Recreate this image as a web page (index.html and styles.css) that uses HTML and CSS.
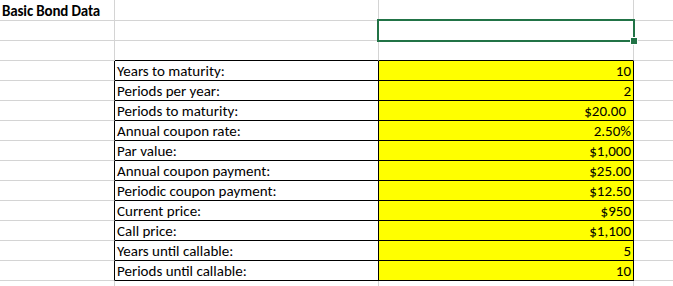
FILE: index.html
```html
<!DOCTYPE html>
<html>
<head>
<meta charset="utf-8">
<link rel="stylesheet" href="styles.css">
</head>
<body>
<div class="sheet">
  <div class="cell first title">Basic Bond Data</div>
  <div class="cell first"></div>
  <div class="cell first"></div>
  <div class="cell first colD"></div>

  <div class="cell"></div>
  <div class="cell"></div>
  <div class="cell selected"><span class="sel-box"></span><span class="sel-handle"></span></div>
  <div class="cell colD"></div>

  <div class="cell"></div>
  <div class="cell top"></div>
  <div class="cell top"></div>
  <div class="cell colD"></div>

  <div class="cell edge"></div><div class="cell tb lab">Years to maturity:</div><div class="cell tb val">10</div><div class="cell colD"></div>
  <div class="cell edge"></div><div class="cell tb lab">Periods per year:</div><div class="cell tb val">2</div><div class="cell colD"></div>
  <div class="cell edge"></div><div class="cell tb lab">Periods to maturity:</div><div class="cell tb val acct">$20.00</div><div class="cell colD"></div>
  <div class="cell edge"></div><div class="cell tb lab">Annual coupon rate:</div><div class="cell tb val">2.50%</div><div class="cell colD"></div>
  <div class="cell edge"></div><div class="cell tb lab">Par value:</div><div class="cell tb val">$1,000</div><div class="cell colD"></div>
  <div class="cell edge"></div><div class="cell tb lab">Annual coupon payment:</div><div class="cell tb val">$25.00</div><div class="cell colD"></div>
  <div class="cell edge"></div><div class="cell tb lab">Periodic coupon payment:</div><div class="cell tb val">$12.50</div><div class="cell colD"></div>
  <div class="cell edge"></div><div class="cell tb lab">Current price:</div><div class="cell tb val">$950</div><div class="cell colD"></div>
  <div class="cell edge"></div><div class="cell tb lab">Call price:</div><div class="cell tb val">$1,100</div><div class="cell colD"></div>
  <div class="cell edge"></div><div class="cell tb lab">Years until callable:</div><div class="cell tb val">5</div><div class="cell colD"></div>
  <div class="cell edge"></div><div class="cell tb lab">Periods until callable:</div><div class="cell tb val">10</div><div class="cell colD"></div>

  <div class="cell"></div>
  <div class="cell"></div>
  <div class="cell"></div>
  <div class="cell colD"></div>
</div>
</body>
</html>
```

FILE: styles.css
```css
html, body {
  margin: 0;
  padding: 0;
  background: #ffffff;
  overflow: hidden;
}

.sheet {
  display: grid;
  grid-template-columns: 115px 264px 255px 1fr;
  grid-template-rows: 21px;
  grid-auto-rows: 20px;
  width: 673px;
  height: 286px;
  overflow: hidden;
  font-family: Carlito, Calibri, "Liberation Sans", sans-serif;
  font-size: 15px;
  color: #000000;
}

.cell {
  box-sizing: border-box;
  border-right: 1px solid #d4d4d4;
  border-bottom: 1px solid #d4d4d4;
  line-height: 19px;
  padding: 1px 2px 0 2px;
  white-space: nowrap;
  overflow: visible;
  min-width: 0;
}

.first {
  padding-top: 2px;
}

.title {
  font-weight: bold;
  padding-left: 2px;
  letter-spacing: -0.15px;
}

.colD {
  border-right: none;
}

.edge {
  border-right-color: #000000;
}

.top {
  border-bottom-color: #000000;
}

.tb {
  border-right-color: #000000;
  border-bottom-color: #000000;
  overflow: hidden;
}

.val {
  background: #ffff00;
  text-align: right;
}

.acct {
  padding-right: 7px;
}

.selected {
  position: relative;
  overflow: visible;
}

.sel-box {
  position: absolute;
  left: -2px;
  top: -2px;
  width: 258px;
  height: 23px;
  box-sizing: border-box;
  border: 2px solid #217346;
  z-index: 2;
}

.sel-handle {
  position: absolute;
  left: 251px;
  top: 16px;
  width: 6px;
  height: 6px;
  background: #217346;
  border: 1px solid #ffffff;
  z-index: 3;
}
```
